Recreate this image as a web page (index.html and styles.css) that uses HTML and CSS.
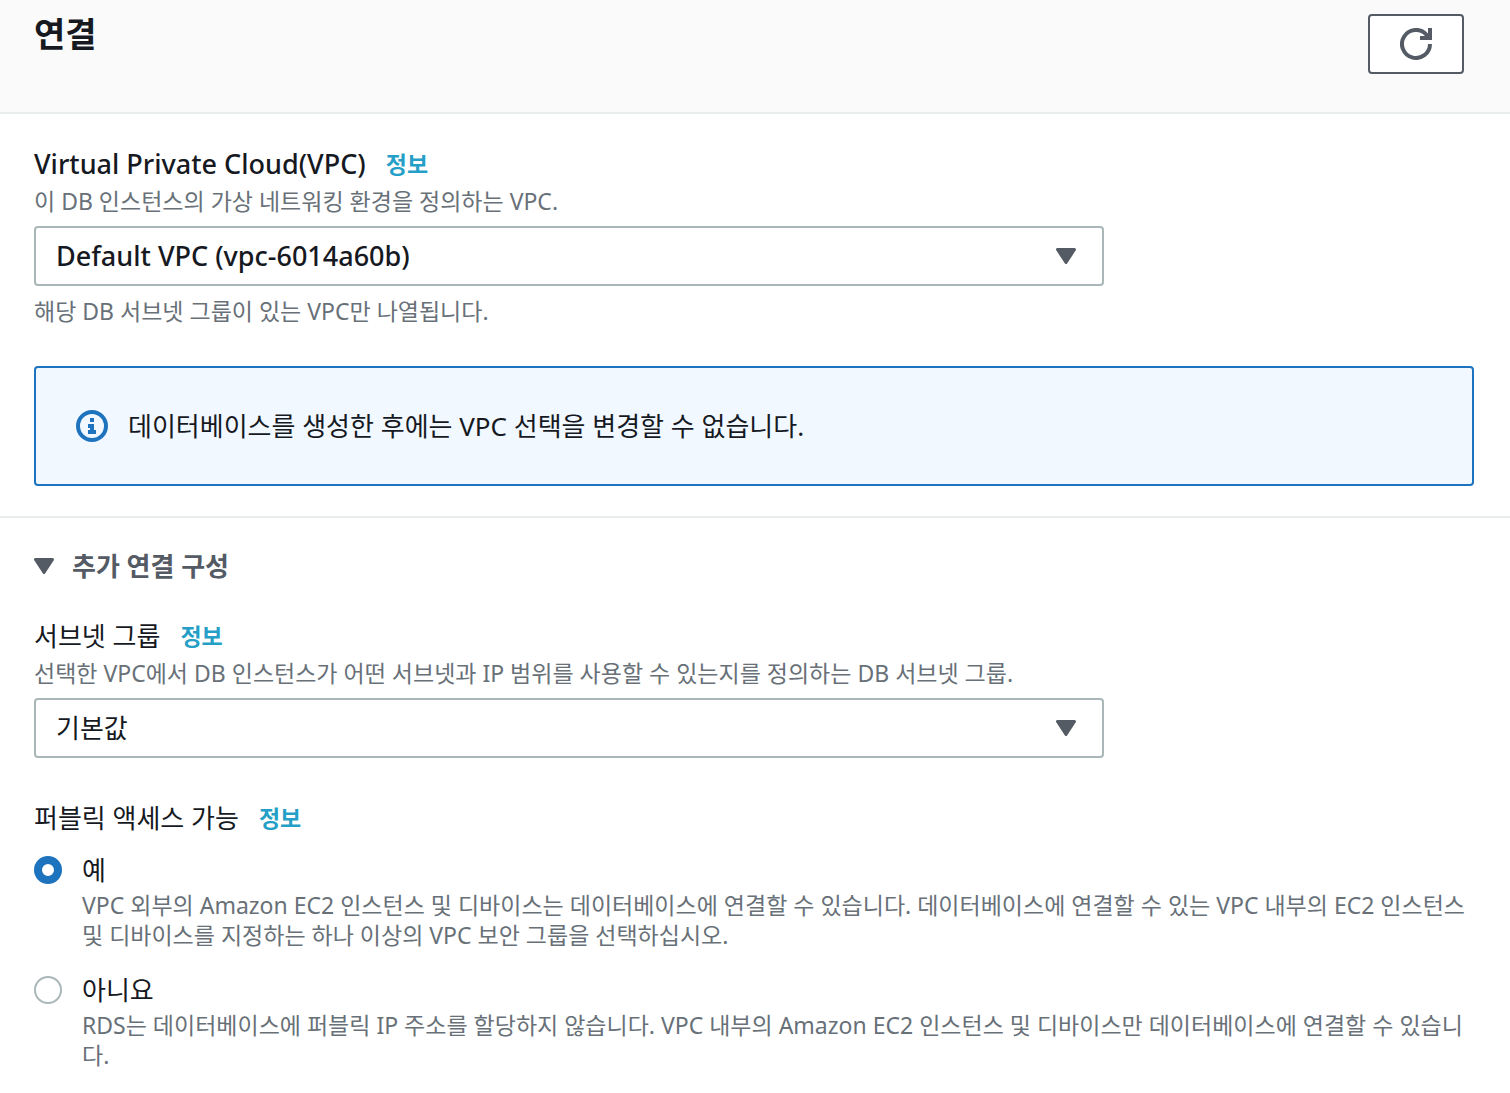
FILE: index.html
```html
<!DOCTYPE html>
<html lang="ko">
<head>
    <meta charset="UTF-8">
    <meta name="viewport" content="width=device-width, initial-scale=1.0">
    <title>연결</title>
    <link rel="stylesheet" href="styles.css">
</head>
<body>
    <!-- Panel header with refresh button -->
    <header class="panel-header">
        <h2>연결</h2>
        <button type="button" class="refresh" aria-label="새로 고침">
            <svg width="32" height="32" viewBox="0 0 32 32">
                <path d="M30 16A14 14 0 1 1 26.5 6.7L28 9" fill="none" stroke="#545b64" stroke-width="4"/>
                <path d="M28 0h4v12H20V8h8z" fill="#545b64"/>
            </svg>
        </button>
    </header>

    <!-- VPC selection -->
    <section class="panel-body">
        <div class="field">
            <div class="label-row">
                <label for="vpc" class="latin">Virtual Private Cloud(VPC)</label>
                <a href="#" class="info">정보</a>
            </div>
            <p class="hint">이 DB 인스턴스의 가상 네트워킹 환경을 정의하는 VPC.</p>
            <div class="select">
                <select id="vpc" class="latin">
                    <option>Default VPC (vpc-6014a60b)</option>
                </select>
                <svg class="caret" width="20" height="16" viewBox="0 0 20 16"><path d="M1.5 1.5h17L10 14.5z"/></svg>
            </div>
            <p class="hint">해당 DB 서브넷 그룹이 있는 VPC만 나열됩니다.</p>
        </div>

        <div class="alert">
            <svg width="32" height="32" viewBox="0 0 32 32">
                <circle cx="16" cy="16" r="14" fill="none" stroke="#1e73be" stroke-width="4"/>
                <path d="M14 8h4v4h-4zM12 14h6v6h2v4h-8v-4h2v-2h-2z" fill="#1e73be"/>
            </svg>
            <p>데이터베이스를 생성한 후에는 VPC 선택을 변경할 수 없습니다.</p>
        </div>
    </section>

    <!-- Additional connectivity configuration -->
    <details class="extra" open>
        <summary>
            <svg class="caret" width="20" height="16" viewBox="0 0 20 16"><path d="M1.5 1.5h17L10 14.5z"/></svg>
            추가 연결 구성
        </summary>

        <div class="field">
            <div class="label-row">
                <label for="subnet">서브넷 그룹</label>
                <a href="#" class="info">정보</a>
            </div>
            <p class="hint">선택한 VPC에서 DB 인스턴스가 어떤 서브넷과 IP 범위를 사용할 수 있는지를 정의하는 DB 서브넷 그룹.</p>
            <div class="select">
                <select id="subnet">
                    <option>기본값</option>
                </select>
                <svg class="caret" width="20" height="16" viewBox="0 0 20 16"><path d="M1.5 1.5h17L10 14.5z"/></svg>
            </div>
        </div>

        <div class="field" role="radiogroup" aria-labelledby="public-label">
            <div class="label-row">
                <span id="public-label">퍼블릭 액세스 가능</span>
                <a href="#" class="info">정보</a>
            </div>
            <div class="option">
                <input type="radio" name="public" id="public-yes" checked>
                <label for="public-yes">예</label>
                <p class="hint">VPC 외부의 Amazon EC2 인스턴스 및 디바이스는 데이터베이스에 연결할 수 있습니다. 데이터베이스에 연결할 수 있는 VPC 내부의 EC2 인스턴스 및 디바이스를 지정하는 하나 이상의 VPC 보안 그룹을 선택하십시오.</p>
            </div>
            <div class="option">
                <input type="radio" name="public" id="public-no">
                <label for="public-no">아니요</label>
                <p class="hint">RDS는 데이터베이스에 퍼블릭 IP 주소를 할당하지 않습니다. VPC 내부의 Amazon EC2 인스턴스 및 디바이스만 데이터베이스에 연결할 수 있습니다.</p>
            </div>
        </div>
    </details>
</body>
</html>
```
FILE: styles.css
```css
* {
    box-sizing: border-box;
}

body {
    margin: 0;
    background: #fff;
    color: #16191f;
    font-family: "Noto Sans", "Noto Sans CJK KR", sans-serif;
    font-size: 26px;
    line-height: 44px;
}

h2, p {
    margin: 0;
}

/* Header */
.panel-header {
    display: flex;
    justify-content: space-between;
    align-items: flex-start;
    padding: 14px 46px 38px 34px;
    background: #fafafa;
    border-bottom: 2px solid #eaeded;
}

.panel-header h2 {
    font-size: 34px;
    line-height: 40px;
    font-weight: 700;
}

.refresh {
    display: flex;
    justify-content: center;
    align-items: center;
    width: 96px;
    height: 60px;
    padding: 0;
    background: #fff;
    border: 2px solid #545b64;
    border-radius: 4px;
}

/* Sections */
.panel-body {
    padding: 28px 36px 30px 34px;
    border-bottom: 2px solid #eaeded;
}

.extra {
    padding: 26px 36px 22px 34px;
}

.extra summary {
    display: flex;
    align-items: center;
    gap: 18px;
    margin-bottom: 26px;
    color: #545b64;
    font-weight: 700;
    list-style: none;
}

.caret {
    fill: #545b64;
    stroke: #545b64;
    stroke-width: 3;
    stroke-linejoin: round;
}

/* Form fields */
.field + .field {
    margin-top: 38px;
}

.label-row {
    display: flex;
    align-items: center;
    gap: 20px;
}

.info {
    color: #259fc7;
    font-size: 23px;
    font-weight: 700;
    text-decoration: none;
}

.hint {
    color: #687078;
    font-size: 23px;
    line-height: 30px;
}

.select {
    position: relative;
    width: calc(75% - 10px);
    margin: 10px 0;
}

.select select {
    display: block;
    width: 100%;
    height: 60px;
    padding: 0 60px 0 20px;
    appearance: none;
    background: #fff;
    border: 2px solid #aab7b8;
    border-radius: 4px;
    color: inherit;
    font: inherit;
}

.select .caret {
    position: absolute;
    top: 22px;
    right: 28px;
    pointer-events: none;
}

.latin, .select .latin {
    font-size: 27px;
    font-weight: 500;
}

/* Info box */
.alert {
    display: flex;
    align-items: center;
    gap: 20px;
    min-height: 120px;
    margin-top: 40px;
    padding: 36px 40px;
    background: #f1f8ff;
    border: 2px solid #1e73be;
    border-radius: 4px;
}

/* Radio options */
.option {
    display: grid;
    grid-template-columns: 28px 1fr;
    column-gap: 20px;
    align-items: center;
    margin-top: 10px;
    line-height: 40px;
}

.option + .option {
    margin-top: 20px;
}

.option input {
    width: 28px;
    height: 28px;
    margin: 0;
    appearance: none;
    background: #fff;
    border: 2px solid #aab7b8;
    border-radius: 50%;
}

.option input:checked {
    border: 8px solid #1e73be;
}

.option .hint {
    grid-column: 2;
}
```
